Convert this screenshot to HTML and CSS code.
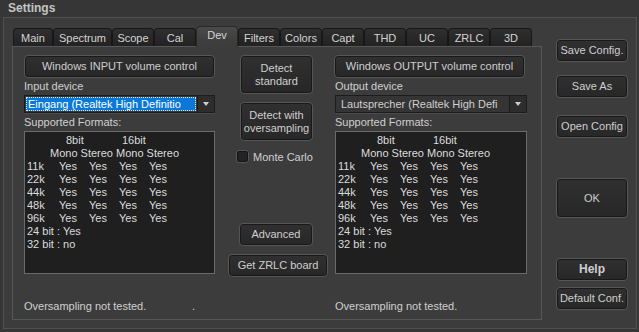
FILE: index.html
```html
<!DOCTYPE html>
<html>
<head>
<meta charset="utf-8">
<title>Settings</title>
<link rel="stylesheet" href="styles.css">
</head>
<body>
<div class="window">
  <div class="titlebar">Settings</div>
  <div class="frame">
    <div class="tabctl">
      <div class="tabs">
        <div class="tab first">Main</div>
        <div class="tab wide">Spectrum</div>
        <div class="tab">Scope</div>
        <div class="tab">Cal</div>
        <div class="tab active">Dev</div>
        <div class="tab">Filters</div>
        <div class="tab">Colors</div>
        <div class="tab">Capt</div>
        <div class="tab">THD</div>
        <div class="tab">UC</div>
        <div class="tab">ZRLC</div>
        <div class="tab">3D</div>
      </div>
      <div class="panel">
        <div class="devcol">
          <div class="btn vol">Windows INPUT volume control</div>
          <div class="lbl">Input device</div>
          <div class="select">
            <div class="field hl"><span>Eingang (Realtek High Definitio</span></div>
            <div class="arrow"><i></i></div>
          </div>
          <div class="lbl">Supported Formats:</div>
          <div class="list">
            <div class="row hdr1"><span class="b8">8bit</span><span>16bit</span></div>
            <div class="row hdr2">Mono Stereo Mono Stereo</div>
            <div class="row"><span class="k">11k</span><span>Yes</span><span>Yes</span><span>Yes</span><span>Yes</span></div>
            <div class="row"><span class="k">22k</span><span>Yes</span><span>Yes</span><span>Yes</span><span>Yes</span></div>
            <div class="row"><span class="k">44k</span><span>Yes</span><span>Yes</span><span>Yes</span><span>Yes</span></div>
            <div class="row"><span class="k">48k</span><span>Yes</span><span>Yes</span><span>Yes</span><span>Yes</span></div>
            <div class="row"><span class="k">96k</span><span>Yes</span><span>Yes</span><span>Yes</span><span>Yes</span></div>
            <div class="row">24 bit : Yes</div>
            <div class="row">32 bit : no</div>
          </div>
          <div class="status"><span class="stext">Oversampling not tested.</span><span class="dot">.</span></div>
        </div>
        <div class="midcol">
          <div class="btn tall">Detect<br>standard</div>
          <div class="btn tall second">Detect with<br>oversampling</div>
          <label class="check"><span class="box"></span>Monte Carlo</label>
          <div class="btn adv">Advanced</div>
          <div class="btn zrlc">Get ZRLC board</div>
        </div>
        <div class="devcol outcol">
          <div class="btn vol">Windows OUTPUT volume control</div>
          <div class="lbl">Output device</div>
          <div class="select">
            <div class="field"><span>Lautsprecher (Realtek High Defi</span></div>
            <div class="arrow"><i></i></div>
          </div>
          <div class="lbl">Supported Formats:</div>
          <div class="list">
            <div class="row hdr1"><span class="b8">8bit</span><span>16bit</span></div>
            <div class="row hdr2">Mono Stereo Mono Stereo</div>
            <div class="row"><span class="k">11k</span><span>Yes</span><span>Yes</span><span>Yes</span><span>Yes</span></div>
            <div class="row"><span class="k">22k</span><span>Yes</span><span>Yes</span><span>Yes</span><span>Yes</span></div>
            <div class="row"><span class="k">44k</span><span>Yes</span><span>Yes</span><span>Yes</span><span>Yes</span></div>
            <div class="row"><span class="k">48k</span><span>Yes</span><span>Yes</span><span>Yes</span><span>Yes</span></div>
            <div class="row"><span class="k">96k</span><span>Yes</span><span>Yes</span><span>Yes</span><span>Yes</span></div>
            <div class="row">24 bit : Yes</div>
            <div class="row">32 bit : no</div>
          </div>
          <div class="status"><span class="stext">Oversampling not tested.</span></div>
        </div>
      </div>
    </div>
    <div class="side">
      <div class="btn s1">Save Config.</div>
      <div class="btn s2">Save As</div>
      <div class="btn s3">Open Config</div>
      <div class="btn ok">OK</div>
      <div class="btn help">Help</div>
      <div class="btn s6">Default Conf.</div>
    </div>
  </div>
</div>
</body>
</html>
```
FILE: styles.css
```css
* { box-sizing: border-box; }
html, body { margin: 0; padding: 0; }
body {
  width: 639px; height: 332px; overflow: hidden;
  background: #333;
  font-family: "Liberation Sans", Arial, sans-serif;
  font-size: 11px;
  color: #d0d0d0;
}
.window { width: 639px; height: 332px; background: #363636; }
.titlebar {
  height: 17px; padding-left: 8px;
  font-weight: bold; font-size: 12px; line-height: 17px;
  color: #c4c4c4;
}
.frame {
  margin: 0 2px 0 3px;
  height: 312px;
  border: 1px solid #505050;
  background: #3c3c3c;
  display: flex;
}
.tabctl { margin: 8px 0 0 8px; width: 530px; }
.tabs { display: flex; align-items: flex-end; height: 20px; padding-left: 1px; }
.tab {
  width: 42px; height: 18px; line-height: 18px;
  text-align: center;
  background: linear-gradient(#2f2f2f, #222);
  border: 1px solid #171717; border-bottom: none;
  border-radius: 4px 4px 0 0;
  color: #d4d4d4;
}
.tab.first { width: 40px; }
.tab.wide { width: 59px; }
.tab.active {
  height: 21px; line-height: 16px; margin-bottom: -1px;
  background: linear-gradient(#4a4a4a, #3e3e3e 70%, #3c3c3c);
  border-color: #2a2a2a;
  position: relative; z-index: 1;
}
.panel {
  height: 274px;
  border: 1px solid #575757;
  background: #3c3c3c;
  display: flex;
  padding: 8px 0 0 11px;
}
.btn {
  display: flex; align-items: center; justify-content: center;
  text-align: center;
  background: linear-gradient(#303030, #272727);
  border: 1px solid #565656;
  box-shadow: inset 0 0 0 1px #191919;
  border-radius: 4px;
  color: #cfcfcf;
  height: 23px;
  line-height: 13px;
}
.devcol { width: 191px; display: flex; flex-direction: column; }
.outcol { margin-left: 7px; width: 192px; }
.vol { height: 23px; }
.outcol .vol { width: 191px; margin-left: -1px; }
.lbl { height: 14px; line-height: 14px; margin-top: 1px; }
.select + .lbl { margin-top: 2px; }
.select {
  display: flex; height: 18px; margin-top: 2px;
  border: 1px solid #1c1c1c;
  box-shadow: 0 1px 0 #4c4c4c;
}
.field {
  flex: 1; padding: 1px; background: #353535;
  line-height: 14px; white-space: nowrap; overflow: hidden;
}
.field span { display: block; height: 100%; padding-left: 3px; }
.outcol .field span { padding-left: 4px; }
.field.hl span {
  background: #0a78d8; color: #fff;
  outline: 1px dotted #e8e8e8; outline-offset: -1px;
  padding-left: 2px;
}
.arrow {
  width: 17px; background: #2d2d2d; border-left: 1px solid #1b1b1b;
  display: flex; align-items: center; justify-content: center;
}
.arrow i {
  display: block; width: 0; height: 0;
  border-left: 3px solid transparent; border-right: 3px solid transparent;
  border-top: 4px solid #d0d0d0;
}
.list {
  height: 143px; margin-top: 2px;
  background: #1f1f1f;
  border: 1px solid #6a6a6a;
  padding: 2px 0 0 2px;
  line-height: 13px;
  color: #dcdcdc;
}
.row { display: flex; height: 13px; white-space: nowrap; }
.row span { width: 30px; }
.row .k { width: 32px; }
.hdr1 { padding-left: 39px; }
.hdr1 .b8 { width: 56px; }
.hdr2 { padding-left: 23px; }
.status { margin-top: 25px; line-height: 14px; display: flex; white-space: nowrap; }
.stext { width: 168px; }
.midcol { width: 100px; margin-left: 13px; display: flex; flex-direction: column; }
.tall { height: 39px; width: 73px; margin-left: 12px; }
.tall.second { margin-top: 8px; }
.check { display: flex; align-items: center; margin: 8px 0 0 8px; height: 15px; }
.box {
  width: 13px; height: 13px; margin-right: 4px;
  background: #232323; border: 1px solid #555; border-radius: 3px;
  box-shadow: inset 0 0 0 1px #151515;
}
.adv { width: 74px; margin: 59px 0 0 11px; }
.zrlc { width: 100px; margin-top: 8px; }
.side { margin-left: 14px; padding-top: 21px; width: 72px; display: flex; flex-direction: column; }
.s2 { margin-top: 13px; }
.s3 { margin-top: 17px; }
.ok { margin-top: 40px; height: 40px; }
.help { margin-top: 40px; font-weight: bold; font-size: 12px; }
.s6 { margin-top: 6px; }
```
